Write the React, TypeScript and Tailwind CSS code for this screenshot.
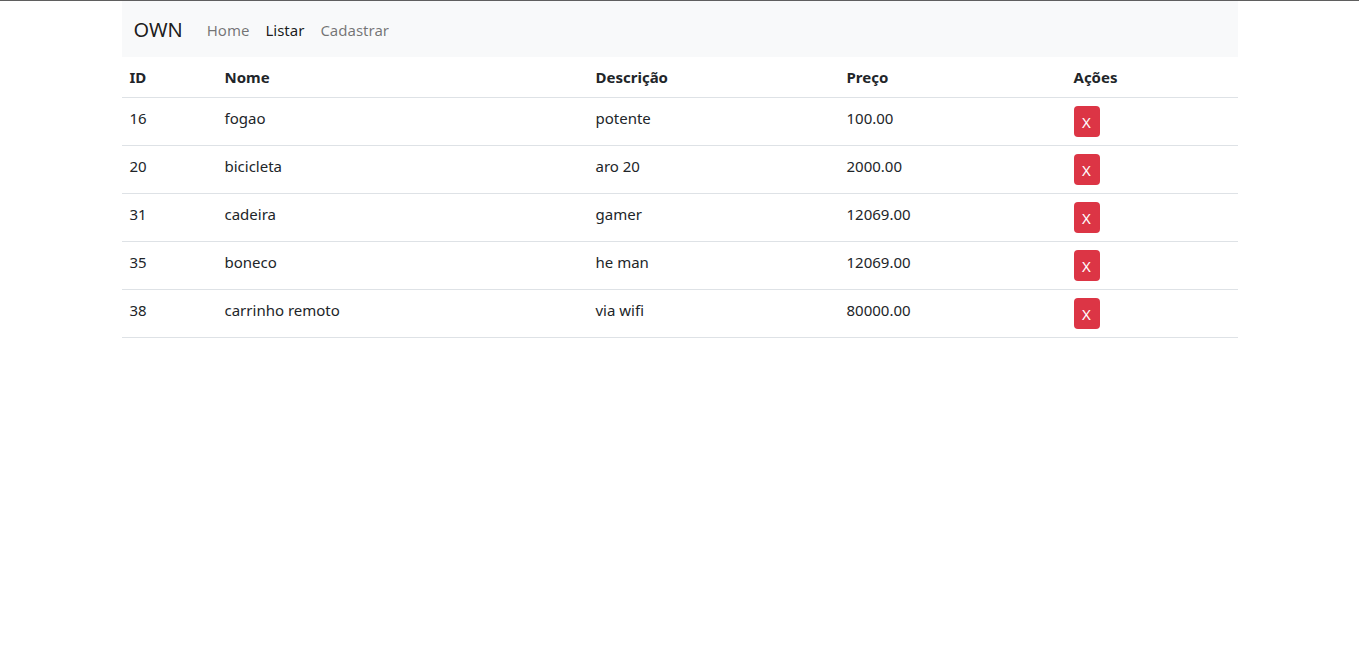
import React from 'react';

interface Produto {
  id: number;
  nome: string;
  descricao: string;
  preco: string;
}

const produtos: Produto[] = [
  { id: 16, nome: 'fogao', descricao: 'potente', preco: '100.00' },
  { id: 20, nome: 'bicicleta', descricao: 'aro 20', preco: '2000.00' },
  { id: 31, nome: 'cadeira', descricao: 'gamer', preco: '12069.00' },
  { id: 35, nome: 'boneco', descricao: 'he man', preco: '12069.00' },
  { id: 38, nome: 'carrinho remoto', descricao: 'via wifi', preco: '80000.00' },
];

const App: React.FC = () => {
  return (
    <div
      className="min-h-[655px] bg-white border-t border-[#5f5f5f] text-[#212529]"
      style={{ fontFamily: '"Noto Sans", "Open Sans", sans-serif' }}
    >
      <div className="w-[1116px] mx-auto">
        {/* Navbar */}
        <nav className="h-14 bg-[#f8f9fa] flex items-center px-3 pt-[2px]">
          <span className="text-[20px] leading-[30px] text-black/90 mr-4">OWN</span>
          <div className="flex items-center text-[15px] leading-6">
            <a className="px-2 text-black/55">Home</a>
            <a className="px-2 text-black/90">Listar</a>
            <a className="px-2 text-black/55">Cadastrar</a>
          </div>
        </nav>

        {/* Tabela */}
        <table className="w-full border-collapse text-[15px] leading-6">
          <thead>
            <tr className="border-b border-[#dee2e6] text-left">
              <th className="w-[95px] p-2 font-bold">ID</th>
              <th className="w-[371px] p-2 font-bold">Nome</th>
              <th className="w-[251px] p-2 font-bold">Descrição</th>
              <th className="w-[227px] p-2 font-bold">Preço</th>
              <th className="p-2 font-bold">Ações</th>
            </tr>
          </thead>
          <tbody>
            {produtos.map((p) => (
              <tr key={p.id} className="border-b border-[#dee2e6] align-top h-12">
                <td className="p-2">{p.id}</td>
                <td className="p-2">{p.nome}</td>
                <td className="p-2">{p.descricao}</td>
                <td className="p-2">{p.preco}</td>
                <td className="px-2 py-2">
                  <button className="w-[26px] h-[31px] pt-[2px] rounded-[4px] bg-[#dc3545] text-white text-[15px] leading-none flex items-center justify-center">
                    X
                  </button>
                </td>
              </tr>
            ))}
          </tbody>
        </table>
      </div>
    </div>
  );
};

export default App;
